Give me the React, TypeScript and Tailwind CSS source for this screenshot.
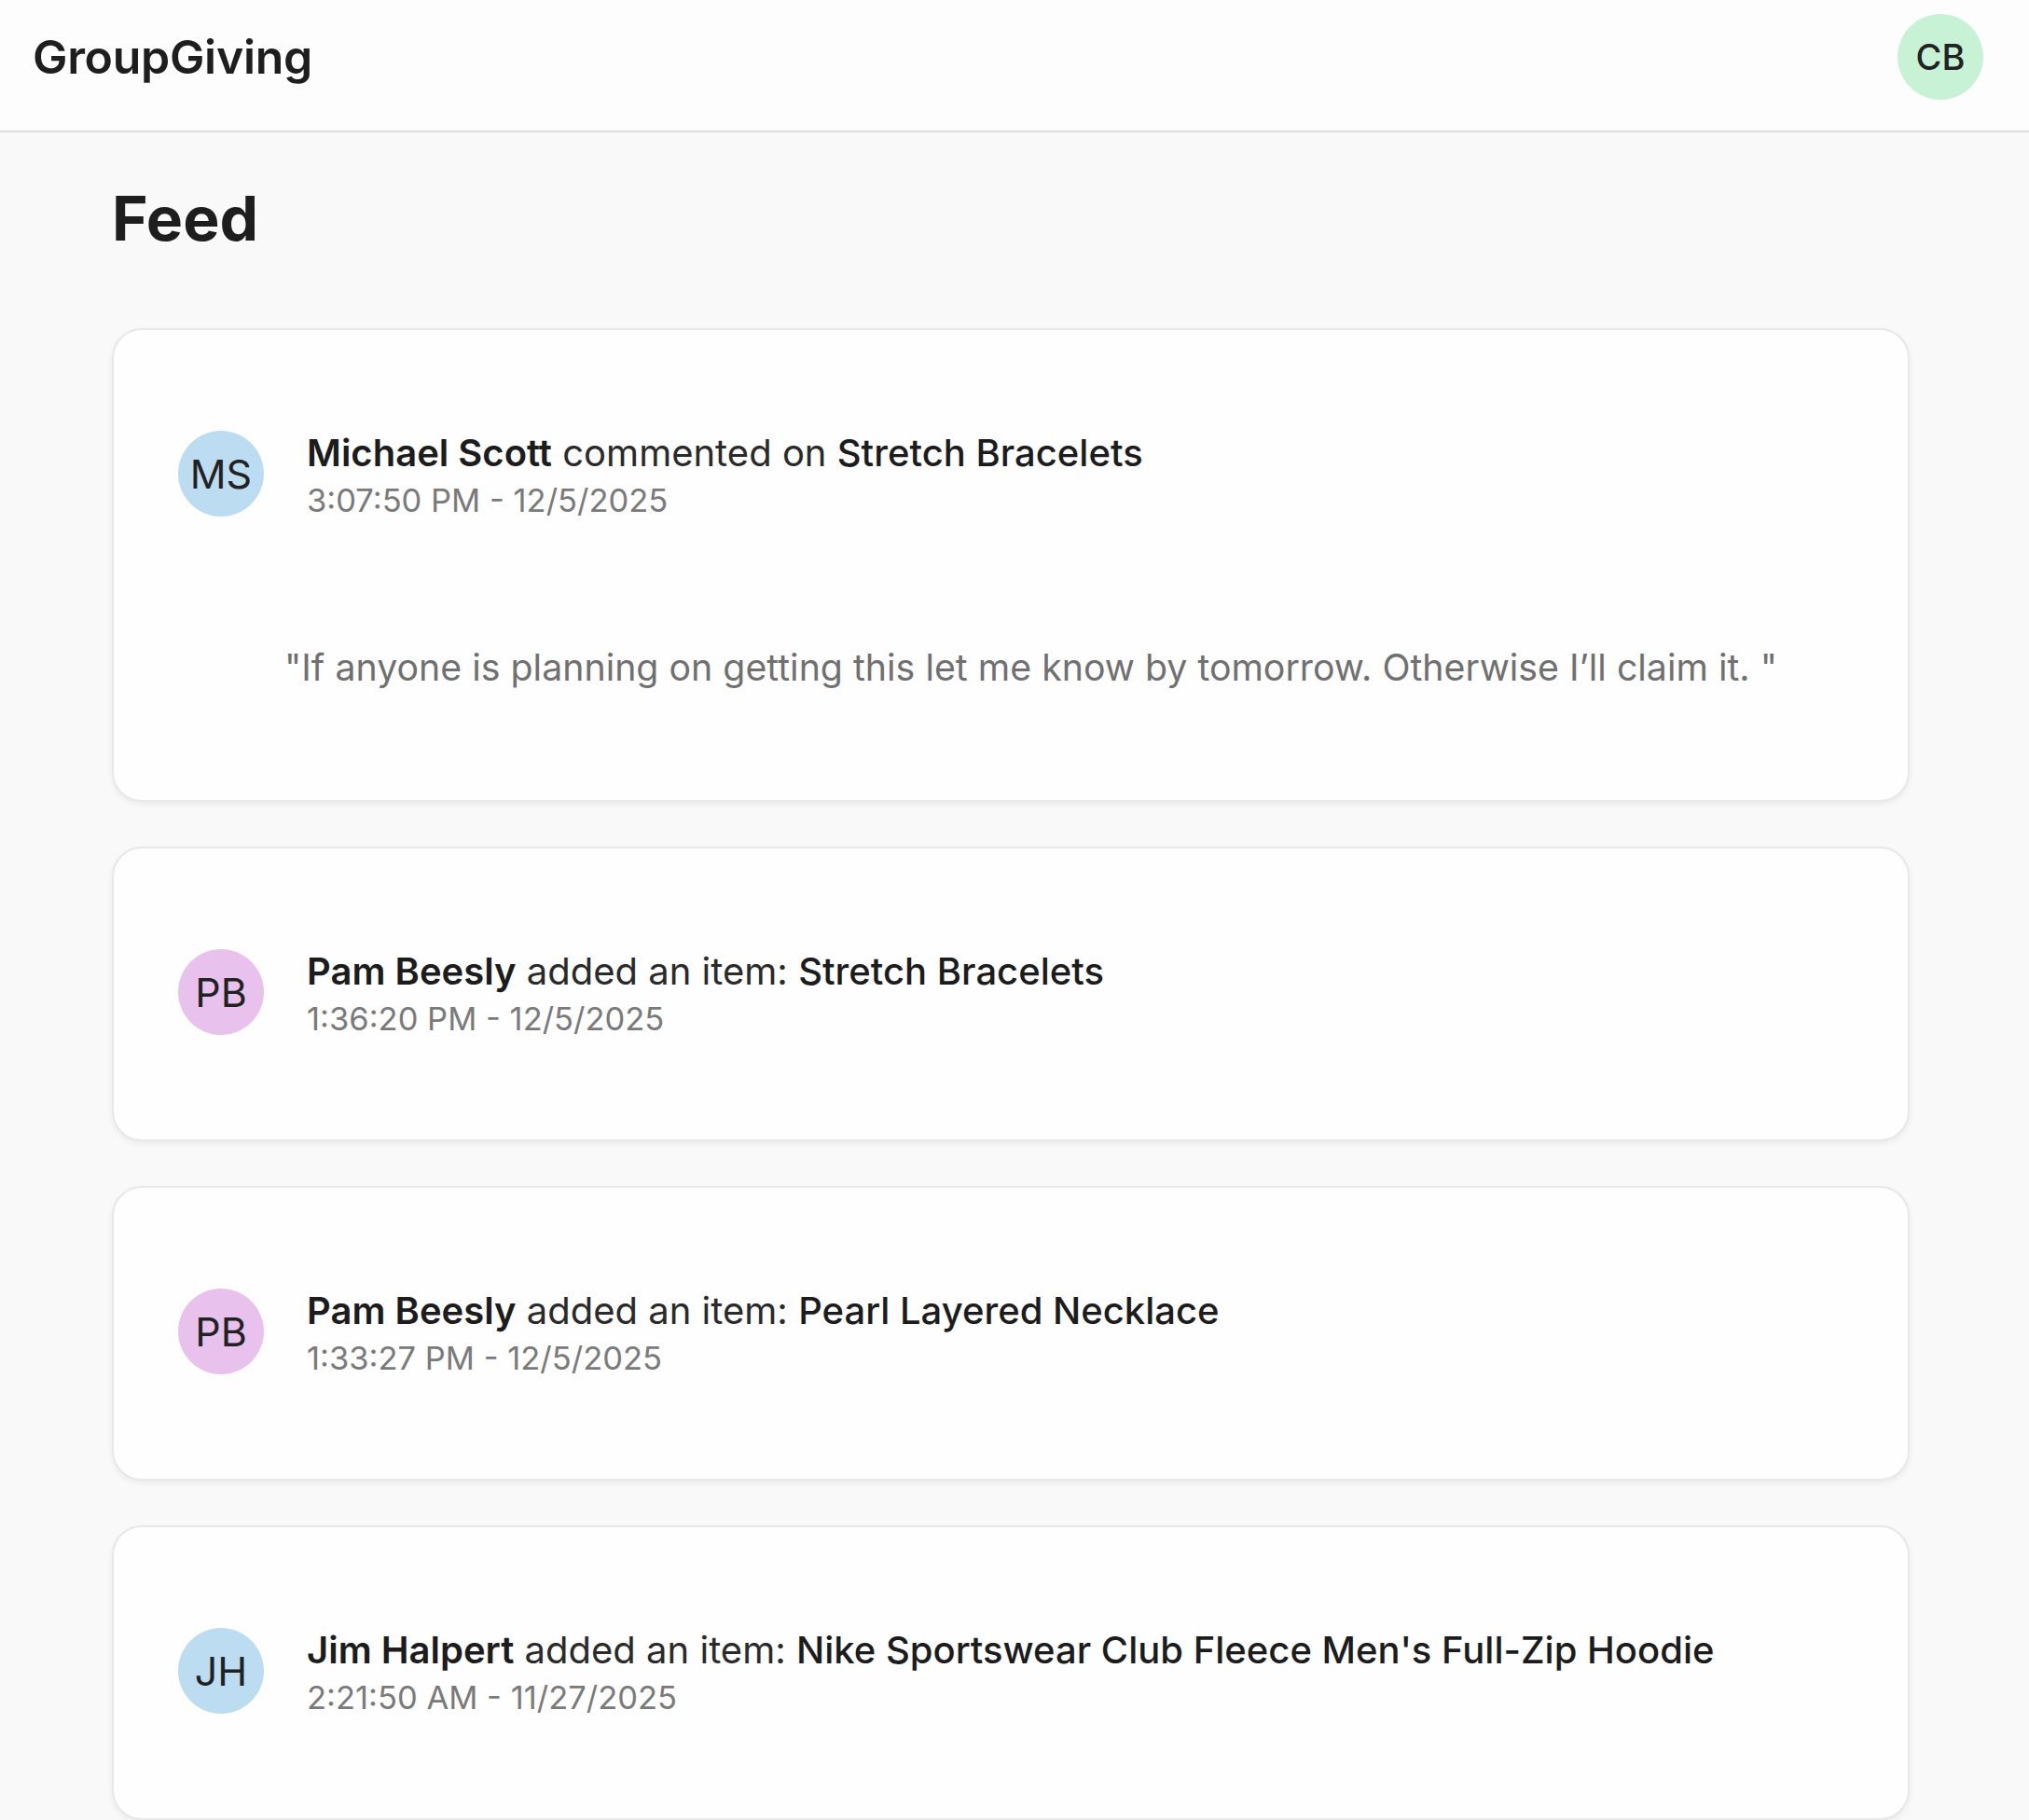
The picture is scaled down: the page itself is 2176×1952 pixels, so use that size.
import React from 'react'

type FeedItem = {
  initials: string
  avatarBg: string
  name: string
  action: string
  target: string
  time: string
  comment?: string
}

const items: FeedItem[] = [
  {
    initials: 'MS',
    avatarBg: 'bg-[#bcdcf2]',
    name: 'Michael Scott',
    action: 'commented on',
    target: 'Stretch Bracelets',
    time: '3:07:50 PM - 12/5/2025',
    comment: '"If anyone is planning on getting this let me know by tomorrow. Otherwise I\u2019ll claim it. "',
  },
  {
    initials: 'PB',
    avatarBg: 'bg-[#e8c2ec]',
    name: 'Pam Beesly',
    action: 'added an item:',
    target: 'Stretch Bracelets',
    time: '1:36:20 PM - 12/5/2025',
  },
  {
    initials: 'PB',
    avatarBg: 'bg-[#e8c2ec]',
    name: 'Pam Beesly',
    action: 'added an item:',
    target: 'Pearl Layered Necklace',
    time: '1:33:27 PM - 12/5/2025',
  },
  {
    initials: 'JH',
    avatarBg: 'bg-[#bcdcf2]',
    name: 'Jim Halpert',
    action: 'added an item:',
    target: "Nike Sportswear Club Fleece Men's Full-Zip Hoodie",
    time: '2:21:50 AM - 11/27/2025',
  },
]

function FeedCard({ item }: { item: FeedItem }) {
  return (
    <div className="bg-[#fefefe] border-2 border-[#e8e8e8] rounded-[32px] shadow-[0_3px_6px_rgba(0,0,0,0.06)] pl-[69px] pr-[26px] pt-[106px] pb-[104px]">
      <div className="flex items-start gap-[46px]">
        <div
          className={`mt-[2px] w-[92px] h-[92px] rounded-full ${item.avatarBg} flex items-center justify-center text-[43px] text-[#222] shrink-0`}
        >
          {item.initials}
        </div>
        <div className="flex flex-col">
          <p className="text-[40px] leading-[52px] text-[#2a2a2a]">
            <span className="font-semibold text-[#1c1c1c]">{item.name}</span> {item.action}{' '}
            <span className="font-medium text-[#1c1c1c]">{item.target}</span>
          </p>
          <p className="text-[34.5px] leading-[50px] text-[#7a7a7a]">{item.time}</p>
        </div>
      </div>
      {item.comment && (
        <p className="mt-[125px] mb-[10px] text-center text-[39.3px] leading-[57px] text-[#707070]">
          {item.comment}
        </p>
      )}
    </div>
  )
}

export default function App() {
  return (
    <div className="min-h-screen bg-[#f9f9f9] font-['Inter',sans-serif]">
      <header className="h-[142px] bg-[#fdfdfd] border-b-2 border-[#dedede] flex items-center justify-between pl-[35px] pr-[49px] pb-[18px]">
        <h1 className="text-[50px] font-semibold text-[#1e1e1e] tracking-[-0.3px]">GroupGiving</h1>
        <div className="w-[92px] h-[92px] rounded-full bg-[#c8f2d5] flex items-center justify-center text-[38px] font-medium text-[#222]">
          CB
        </div>
      </header>
      <main className="pl-[120px] w-[2048px]">
        <h2 className="pt-[52px] text-[66px] leading-[80px] font-bold text-[#1e1e1e]">Feed</h2>
        <div className="mt-[78px] flex flex-col gap-[48px]">
          {items.map((item, i) => (
            <FeedCard key={i} item={item} />
          ))}
        </div>
      </main>
    </div>
  )
}
